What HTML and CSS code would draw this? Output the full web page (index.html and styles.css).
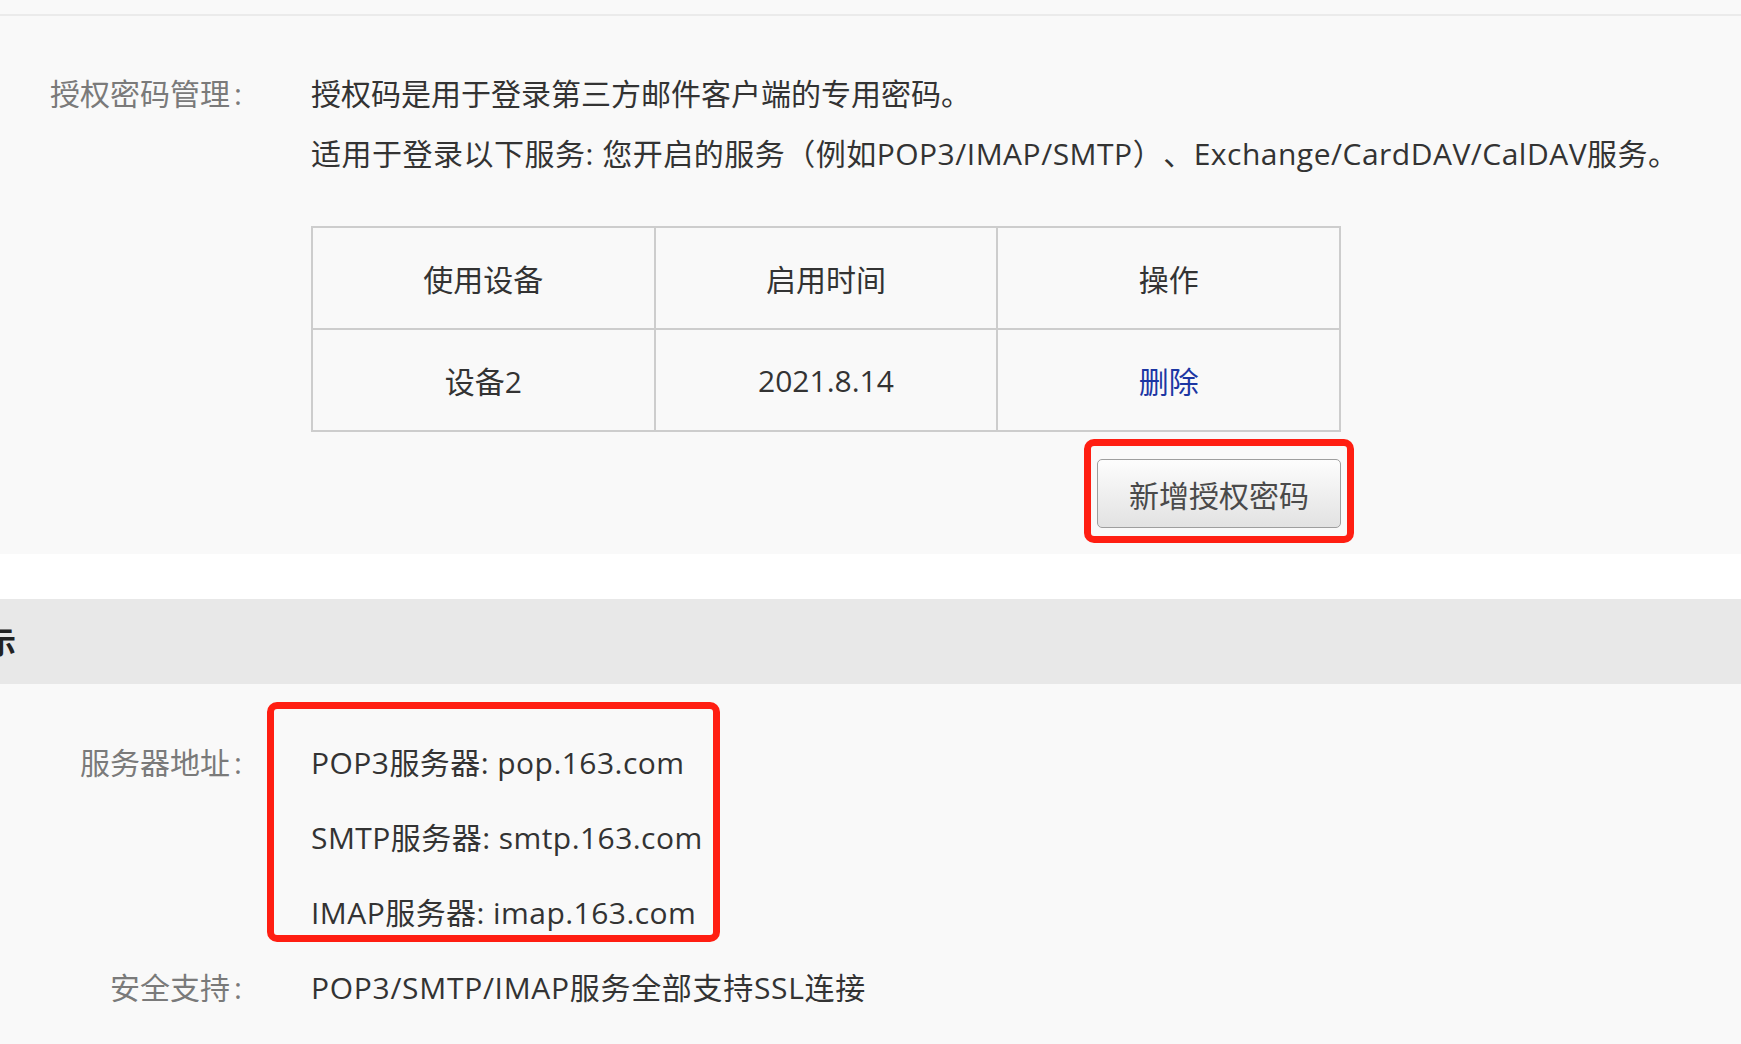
FILE: index.html
```html
<!DOCTYPE html>
<html lang="zh-CN">
  <head>
    <meta charset="UTF-8">
    <meta name="viewport" content="width=device-width, initial-scale=1.0">
    <link rel="stylesheet" href="styles.css">
    <title>客户端授权密码</title>
  </head>
  <body>
    <div class="topbar"></div>

    <div class="section auth">
      <div class="row">
        <div class="label">授权密码管理<span class="colon">:</span></div>
        <div class="content">
          <p>授权码是用于登录第三方邮件客户端的专用密码。</p>
          <p class="services">适用于登录以下服务: 您开启的服务（例如POP3/IMAP/SMTP）、Exchange/CardDAV/CalDAV服务。</p>

          <table class="devices">
            <tr>
              <th>使用设备</th>
              <th>启用时间</th>
              <th>操作</th>
            </tr>
            <tr>
              <td>设备2</td>
              <td>2021.8.14</td>
              <td><a href="#" class="delete">删除</a></td>
            </tr>
          </table>

          <div class="actions">
            <span class="mark button-mark">
              <button class="add-button">新增授权密码</button>
            </span>
          </div>
        </div>
      </div>
    </div>

    <div class="gap"></div>

    <div class="bar">
      <h3>设置提示</h3>
    </div>

    <div class="section servers">
      <div class="row">
        <div class="label">服务器地址<span class="colon">:</span></div>
        <div class="content">
          <div class="mark server-mark">
            <p>POP3服务器: pop.163.com</p>
            <p>SMTP服务器: smtp.163.com</p>
            <p>IMAP服务器: imap.163.com</p>
          </div>
        </div>
      </div>
      <div class="row">
        <div class="label">安全支持<span class="colon">:</span></div>
        <div class="content">
          <p class="ssl">POP3/SMTP/IMAP服务全部支持SSL连接</p>
        </div>
      </div>
    </div>
  </body>
</html>
```

FILE: styles.css
```css
body {
  margin: 0;
  overflow: hidden;
  background-color: #f9f9f9;
  font-family: "Open Sans", "Noto Sans CJK SC", sans-serif;
  font-size: 30px;
  color: #333;
  text-spacing-trim: space-all;
}

p {
  margin: 0;
}

.topbar {
  height: 14px;
  background-color: #f9f9f9;
  border-bottom: 2px solid #ebebeb;
}

.section {
  background-color: #f9f9f9;
}

.auth {
  padding: 48px 0 26px;
}

.row {
  display: flex;
}

.label {
  width: 244px;
  flex-shrink: 0;
  text-align: right;
  color: #7a7a7a;
}

.colon {
  margin-left: 4px;
  margin-right: 2px;
}

.content {
  padding-left: 67px;
}

.auth .label,
.auth p {
  line-height: 60px;
}

.services {
  letter-spacing: 0.5px;
}

.devices {
  width: 1030px;
  margin-top: 42px;
  border-collapse: collapse;
  border: 2px solid #cdcdcd;
  table-layout: fixed;
}

.devices th,
.devices td {
  height: 100px;
  padding: 0;
  border: 2px solid #cdcdcd;
  text-align: center;
  font-weight: normal;
  color: #333;
}

.delete {
  color: #1c36a3;
  text-decoration: none;
}

.actions {
  width: 1030px;
  margin-top: 27px;
  display: flex;
  justify-content: flex-end;
}

.mark {
  position: relative;
  display: inline-block;
}

.mark::after {
  content: "";
  position: absolute;
  border: 7px solid #ff1e12;
  border-radius: 10px;
}

.button-mark::after {
  top: -20px;
  left: -13px;
  right: -13px;
  bottom: -15px;
}

.add-button {
  display: block;
  width: 244px;
  height: 69px;
  padding: 0;
  font-family: inherit;
  font-size: 30px;
  color: #4a4a4a;
  background: linear-gradient(#fdfdfd, #e2e2e2);
  border: 1px solid #9e9e9e;
  border-radius: 5px;
}

.gap {
  height: 45px;
  background-color: #fff;
}

.bar {
  height: 85px;
  background-color: #e8e8e8;
}

.bar h3 {
  margin: 0 0 0 -104px;
  line-height: 85px;
  font-size: 30px;
  font-weight: bold;
  color: #222;
}

.servers {
  padding-top: 41px;
  padding-bottom: 40px;
}

.servers .label,
.servers p {
  line-height: 75px;
}

.server-mark {
  display: block;
}

.server-mark p {
  letter-spacing: 0.45px;
}

.ssl {
  letter-spacing: 0.7px;
}

.server-mark::after {
  top: -23px;
  left: -44px;
  width: 439px;
  height: 226px;
}
```
